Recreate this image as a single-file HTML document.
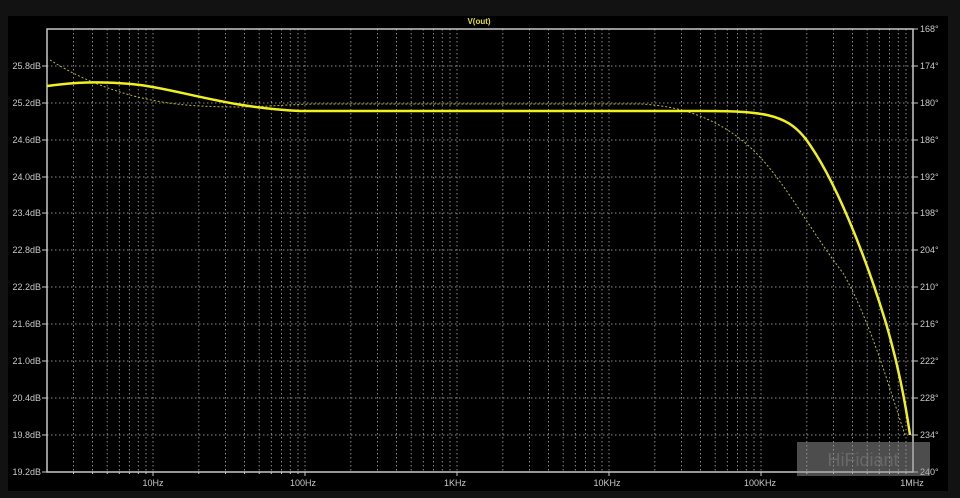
<!DOCTYPE html>
<html><head><style>
html,body{margin:0;padding:0;background:#121212;}
svg{display:block}
text{font-family:"Liberation Sans",sans-serif;font-size:9px;fill:#c8c8c8}
</style></head><body>
<svg width="960" height="498" viewBox="0 0 960 498" xmlns="http://www.w3.org/2000/svg">
<rect x="0" y="0" width="960" height="498" fill="#121212"/>
<rect x="8" y="16" width="940" height="475" fill="#000"/>
<g stroke="#8a8a8a" stroke-width="1" stroke-dasharray="1.5,2.5" fill="none">
<path d="M73.5 29V472M92.5 29V472M107.2 29V472M119.3 29V472M129.4 29V472M138.3 29V472M146 29V472M153 29V472
M198.8 29V472M225.5 29V472M244.5 29V472M259.2 29V472M271.3 29V472M281.5 29V472M290.3 29V472M298 29V472M305 29V472
M350.8 29V472M377.5 29V472M396.5 29V472M411.2 29V472M423.3 29V472M433.5 29V472M442.3 29V472M450 29V472M457 29V472
M502.8 29V472M529.5 29V472M548.5 29V472M563.2 29V472M575.3 29V472M585.5 29V472M594.3 29V472M602 29V472M609 29V472
M654.8 29V472M681.5 29V472M700.5 29V472M715.2 29V472M727.3 29V472M737.5 29V472M746.3 29V472M754 29V472M761 29V472
M806.8 29V472M833.5 29V472M852.5 29V472M867.2 29V472M879.3 29V472M889.5 29V472M898.3 29V472M906 29V472"/>
<path d="M47 66H913M47 103H913M47 140H913M47 177H913M47 213H913M47 250H913M47 287H913M47 324H913M47 361H913M47 398H913M47 435H913"/>
</g>
<rect x="47" y="29" width="866" height="443" fill="none" stroke="#c8c8c8" stroke-width="1.5"/>
<g stroke="#c8c8c8" stroke-width="1">
<path d="M42 66H47M42 103H47M42 140H47M42 177H47M42 213H47M42 250H47M42 287H47M42 324H47M42 361H47M42 398H47M42 435H47M42 472H47"/>
<path d="M913 29H918M913 66H918M913 103H918M913 140H918M913 177H918M913 213H918M913 250H918M913 287H918M913 324H918M913 361H918M913 398H918M913 435H918M913 472H918"/>
<path d="M153 472v4M305 472v4M457 472v4M609 472v4M761 472v4M73.5 472v2M92.5 472v2M107.2 472v2M119.3 472v2M129.4 472v2M138.3 472v2M146 472v2M198.8 472v2M225.5 472v2M244.5 472v2M259.2 472v2M271.3 472v2M281.5 472v2M290.3 472v2M298 472v2M806.8 472v2M833.5 472v2M852.5 472v2M867.2 472v2M879.3 472v2M889.5 472v2M898.3 472v2M906 472v2"/>
</g>
<g text-anchor="end">
<text x="41" y="69">25.8dB</text><text x="41" y="106">25.2dB</text><text x="41" y="143">24.6dB</text><text x="41" y="180">24.0dB</text><text x="41" y="216">23.4dB</text><text x="41" y="253">22.8dB</text><text x="41" y="290">22.2dB</text><text x="41" y="327">21.6dB</text><text x="41" y="364">21.0dB</text><text x="41" y="401">20.4dB</text><text x="41" y="438">19.8dB</text><text x="41" y="475">19.2dB</text>
</g>
<g>
<text x="920" y="32">168°</text><text x="920" y="69">174°</text><text x="920" y="106">180°</text><text x="920" y="143">186°</text><text x="920" y="180">192°</text><text x="920" y="216">198°</text><text x="920" y="253">204°</text><text x="920" y="290">210°</text><text x="920" y="327">216°</text><text x="920" y="364">222°</text><text x="920" y="401">228°</text><text x="920" y="438">234°</text><text x="920" y="475">240°</text>
</g>
<g text-anchor="middle">
<text x="153" y="486">10Hz</text><text x="303" y="486">100Hz</text><text x="455" y="486">1KHz</text><text x="607" y="486">10KHz</text><text x="760" y="486">100KHz</text><text x="912" y="486">1MHz</text>
<text x="479" y="24" style="fill:#e0e020;font-weight:bold;font-size:8px">V(out)</text>
</g>
<path d="M50 60 C90 85 140 103 200 106 S280 104 320 104 L640 104 C690 106 730 125 760 157 C790 190 810 230 843 273 C870 320 890 390 905 435" fill="none" stroke="#b8b830" stroke-width="1" stroke-dasharray="2,2"/>
<path d="M47 86 C70 83 100 80 140 85 S230 108 300 111 L700 111 C760 111 785 113 805 138 C835 178 865 255 885 320 C897 360 905 400 910 435" fill="none" stroke="#f0f020" stroke-width="2.5"/>
<rect x="797" y="442" width="133" height="34" fill="#9a9a9a" opacity="0.5"/>
<text x="863" y="466" text-anchor="middle" style="font-size:18px;fill:#7a7a7a;opacity:0.6">HiFidiant</text>
</svg>
</body></html>
